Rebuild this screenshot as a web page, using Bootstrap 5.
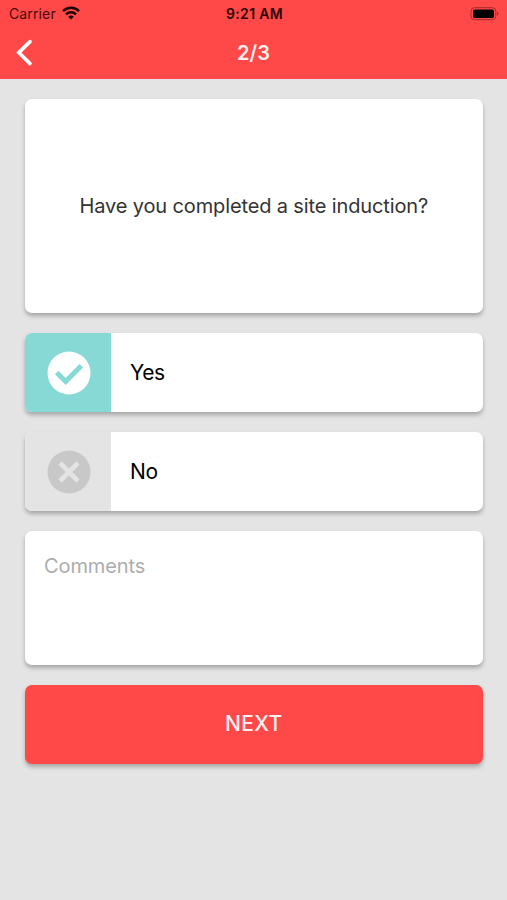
<!DOCTYPE html>
<html lang="en">
<head>
<meta charset="utf-8">
<meta name="viewport" content="width=device-width, initial-scale=1">
<title>Site induction</title>
<link rel="stylesheet" href="https://cdn.jsdelivr.net/npm/bootstrap@5.3.0/dist/css/bootstrap.min.css">
<style>
body { font-family: Inter, "Liberation Sans", sans-serif; background: #e4e4e4; color: #000; min-height: 100vh; overflow: hidden; }
.app-header { background: #ff4949; height: 79px; }
.status-bar { height: 27px; padding: 0 7px 0 9px; font-size: 14px; line-height: 27px; }
.status-bar > * { flex: 1 1 0; }
.carrier { color: #470b0b; letter-spacing: .13px; }
.wifi { margin: -2px 0 0 6px; }
.clock { font-size: 14px; font-weight: 600; color: #2b0505; letter-spacing: .35px; }
.title-bar { height: 52px; padding: 0 16px; }
.title-bar > * { flex: 1 1 0; }
.page-title { font-size: 20px; font-weight: 600; color: #fff0f0; line-height: 52px; }
.survey { padding: 19.5px 24.5px 0 25px; gap: 20px; }
.tile { border: 0; border-radius: 7px; background: #fff; box-shadow: 0 3px 4px rgba(0,0,0,.27); }
.question { height: 214px; font-size: 20px; color: #333; letter-spacing: -.13px; }
.answer { height: 79px; font-size: 21px; letter-spacing: -.4px; }
.answer-icon { width: 86px; padding: 1px 0 0 1px; border-radius: 7px 0 0 7px; background: #e4e4e4; }
.answer-icon.chosen { background: #86d9d5; }
.answer-label { padding: 1px 0 0 19px; }
.comments { height: 134px; padding: 19px; font-size: 20px; line-height: 32px; letter-spacing: -.1px; color: #000; resize: none; }
.comments::placeholder { color: #adadad; opacity: 1; }
.next-btn, .next-btn:hover { height: 79px; background: #ff4949; color: #fff0f0; font-size: 21px; font-weight: 500; letter-spacing: .3px; }
</style>
</head>
<body>
<header class="app-header">
  <div class="status-bar d-flex align-items-center">
    <div class="carrier d-flex align-items-center"><span class="carrier-name">Carrier</span>
      <svg class="wifi" width="18" height="14" viewBox="0 0 18 14" fill="none" stroke="#1c0303" stroke-width="2.5"><path d="M1 5.1a11.5 11.5 0 0 1 16 0M4 8.3a7.2 7.2 0 0 1 10 0"/><path d="M9 13.6 6.2 10.8a4 4 0 0 1 5.6 0z" fill="#1c0303" stroke="none"/></svg>
    </div>
    <div class="clock text-center">9:21 AM</div>
    <div class="d-flex justify-content-end">
      <svg width="30" height="14" viewBox="0 0 30 14"><rect x="1" y=".7" width="24.8" height="12" rx="3.5" fill="none" stroke="#a52a2a"/><rect x="3" y="2.5" width="21" height="8.5" rx="1.7"/><path d="M27.2 4.4q2.4 2.2 0 4.4z" fill="#8a2222"/></svg>
    </div>
  </div>
  <nav class="title-bar d-flex align-items-center" aria-label="Page">
    <div class="d-flex"><svg width="17" height="28" viewBox="0 0 17 28" fill="none" stroke="#fff" stroke-width="3.6" stroke-linecap="round" stroke-linejoin="miter"><path d="M14 2.6 2.8 13.6 14 24.6"/></svg></div>
    <div class="page-title text-center">2/3</div>
    <div></div>
  </nav>
</header>
<main class="survey d-flex flex-column">
  <section class="tile question d-flex align-items-center justify-content-center"><span>Have you completed a site induction?</span></section>
  <div class="tile answer d-flex">
    <div class="answer-icon chosen d-flex align-items-center justify-content-center">
      <svg width="44" height="44" viewBox="0 0 44 44"><circle cx="22" cy="22" r="21.5" fill="#fff"/><path d="m9.7 21.4 9 9L34.3 14.8" fill="none" stroke="#86d9d5" stroke-width="5"/></svg>
    </div>
    <div class="answer-label d-flex align-items-center">Yes</div>
  </div>
  <div class="tile answer d-flex">
    <div class="answer-icon d-flex align-items-center justify-content-center">
      <svg width="44" height="44" viewBox="0 0 44 44"><circle cx="22" cy="22" r="21.5" fill="#c8c8c8"/><path d="m13 13 18 18M31 13 13 31" fill="none" stroke="#e4e4e4" stroke-width="4.6"/></svg>
    </div>
    <div class="answer-label d-flex align-items-center">No</div>
  </div>
  <textarea class="tile comments w-100" placeholder="Comments" aria-label="Comments"></textarea>
  <button type="button" class="btn tile next-btn w-100">NEXT</button>
</main>
<script src="https://cdn.jsdelivr.net/npm/bootstrap@5.3.0/dist/js/bootstrap.bundle.min.js"></script>
</body>
</html>
